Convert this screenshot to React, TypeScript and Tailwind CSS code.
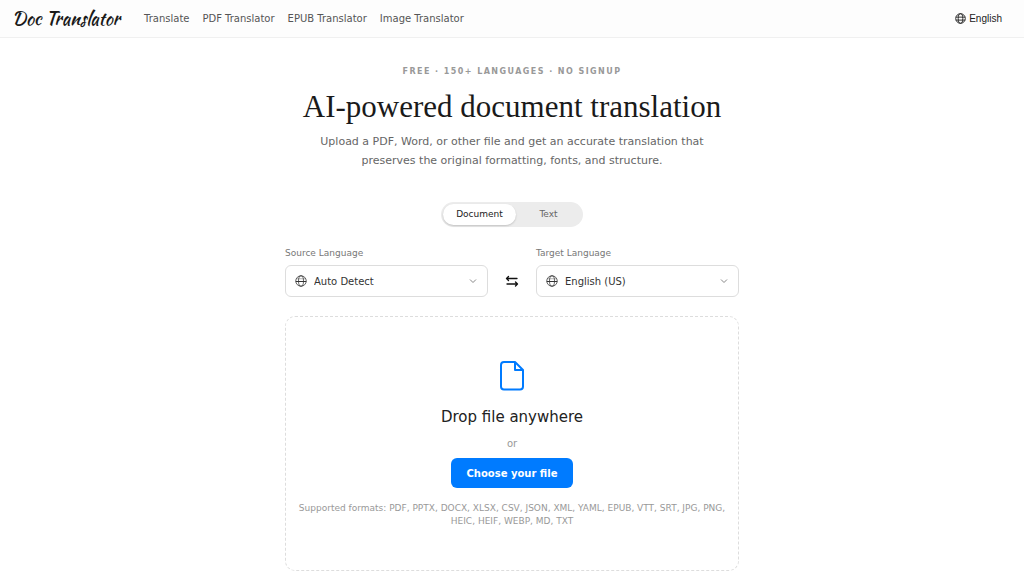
import { useState } from "react";

const navLinks = ["Translate", "PDF Translator", "EPUB Translator", "Image Translator"];

const modes = ["Document", "Text"];

const GlobeIcon = ({ className }: { className?: string }) => (
  <svg viewBox="0 0 24 24" fill="none" stroke="currentColor" strokeWidth="2" className={className} aria-hidden="true">
    <circle cx="12" cy="12" r="10.5" />
    <ellipse cx="12" cy="12" rx="5" ry="10.5" />
    <path d="M2 9h20M2 15.500h20" />
  </svg>
);

const ThinGlobeIcon = ({ className }: { className?: string }) => (
  <svg viewBox="0 0 24 24" fill="none" stroke="currentColor" strokeWidth="1.5" className={className} aria-hidden="true">
    <circle cx="12" cy="12" r="10.5" />
    <ellipse cx="12" cy="12" rx="5" ry="10.5" />
    <path d="M1.500 13h21" strokeWidth="2" />
    <path d="M3 7.500h18" strokeWidth="0.8" />
  </svg>
);

const ChevronIcon = () => (
  <svg
    viewBox="0 0 12 12"
    fill="none"
    stroke="currentColor"
    strokeWidth="1"
    className="pointer-events-none absolute right-[9px] top-1/2 size-3 -translate-y-1/2 text-[#888888]"
    aria-hidden="true"
  >
    <path d="M3 4.500l3 3l3-3" />
  </svg>
);

const SwapIcon = () => (
  <svg
    viewBox="0 0 14 14"
    fill="none"
    stroke="currentColor"
    strokeWidth="1.3"
    strokeLinecap="round"
    strokeLinejoin="round"
    className="size-3.5"
    aria-hidden="true"
  >
    <path d="M12 4.500H1.500M3.500 2.500L1.500 4.500l2 2M2 10h10.500M10.500 8l2 2l-2 2" />
  </svg>
);

const FileIcon = () => (
  <svg
    viewBox="0 0 24 30"
    fill="none"
    stroke="currentColor"
    strokeWidth="2"
    strokeLinejoin="round"
    className="h-[30px] w-6 text-[#007bff]"
    aria-hidden="true"
  >
    <path d="M4 1h11l8 8v16.500a3 3 0 0 1-3 3H4a3 3 0 0 1-3-3V4a3 3 0 0 1 3-3z" />
    <path d="M15 1v8h8" />
  </svg>
);

type LanguageSelectProps = {
  id: string;
  label: string;
  options: string[];
};

const LanguageSelect = ({ id, label, options }: LanguageSelectProps) => (
  <div className="min-w-0 flex-1">
    <label htmlFor={id} className="block text-[9px] leading-4 text-[#777777]">
      {label}
    </label>
    <div className="relative mt-1 text-[#333333]">
      <ThinGlobeIcon className="pointer-events-none absolute left-2.5 top-1/2 size-3 -translate-y-1/2" />
      <select
        id={id}
        className="h-8 w-full appearance-none rounded-md border border-[#dddddd] bg-white pl-7 pr-6 text-[10px]"
      >
        {options.map((option) => (
          <option key={option}>{option}</option>
        ))}
      </select>
      <ChevronIcon />
    </div>
  </div>
);

const Header = () => (
  <header className="flex h-[38px] items-center border-b border-[#f0f0f0] bg-[#fdfdfd] pl-3 pr-3.5">
    <a href="#" className="whitespace-nowrap font-['Kaushan_Script',cursive] text-[18px] leading-6 text-[#1a1a1a]">
      Doc Translator
    </a>
    <nav className="ml-6 flex gap-[13px]">
      {navLinks.map((link) => (
        <a key={link} href="#" className="whitespace-nowrap text-[10px] leading-4 text-[#555555]">
          {link}
        </a>
      ))}
    </nav>
    <button
      type="button"
      className="ml-auto flex h-6 items-center gap-[3px] rounded-md px-2 font-['Liberation_Sans',Arial,sans-serif] text-[10px] text-[#222222]"
    >
      <GlobeIcon className="size-[11px]" />
      English
    </button>
  </header>
);

const DropZone = () => (
  <section className="mt-[19px] flex flex-col items-center rounded-[10px] border border-dashed border-[#dddddd] px-2 pb-[42px] pt-11 text-center">
    <FileIcon />
    <h2 className="mt-3.5 text-[15px] leading-6 text-[#222222]">Drop file anywhere</h2>
    <p className="mt-[7px] text-[10px] leading-4 text-[#999999]">or</p>
    <button
      type="button"
      className="mt-1.5 h-[30px] rounded-md bg-[#007bff] px-4 text-[10px] font-bold text-white"
    >
      Choose your file
    </button>
    <p className="mt-3.5 text-[9px] leading-[13px] text-[#999999]">
      Supported formats: PDF, PPTX, DOCX, XLSX, CSV, JSON, XML, YAML, EPUB, VTT, SRT, JPG, PNG, HEIC, HEIF, WEBP, MD,
      TXT
    </p>
  </section>
);

const App = () => {
  const [mode, setMode] = useState("Document");

  return (
    <div className="min-h-screen bg-white font-['DejaVu_Sans',sans-serif]">
      <Header />
      <main className="mx-auto max-w-[454px] pb-1 pt-[26px]">
        <div className="text-center">
          <p className="text-[8px] font-bold uppercase leading-4 tracking-[0.18em] text-[#999999]">
            Free · 150+ languages · No signup
          </p>
          <h1 className="mt-[7px] whitespace-nowrap font-['Liberation_Serif',serif] text-[31px] leading-10 text-[#1a1a1a]">
            AI-powered document translation
          </h1>
          <p className="mx-auto mt-[5px] max-w-[410px] text-[11px] leading-[19px] text-[#666666]">
            Upload a PDF, Word, or other file and get an accurate translation that preserves the original formatting,
            fonts, and structure.
          </p>
        </div>
        <div className="mx-auto mt-8 flex w-[142px] rounded-full bg-[#ececec] p-0.5">
          {modes.map((item) => (
            <button
              key={item}
              type="button"
              aria-pressed={mode === item}
              onClick={() => setMode(item)}
              className={
                mode === item
                  ? "h-[21px] w-[73px] rounded-full bg-white text-[9px] text-[#222222] shadow-[0_1px_2px_rgba(0,0,0,0.18)]"
                  : "h-[21px] flex-1 rounded-full text-[9px] text-[#666666]"
              }
            >
              {item}
            </button>
          ))}
        </div>
        <div className="mt-[18px] flex items-end">
          <LanguageSelect id="source" label="Source Language" options={["Auto Detect", "English (US)"]} />
          <button
            type="button"
            aria-label="Swap languages"
            className="flex h-8 w-12 items-center justify-center text-[#111111]"
          >
            <SwapIcon />
          </button>
          <LanguageSelect id="target" label="Target Language" options={["English (US)", "Spanish"]} />
        </div>
        <DropZone />
      </main>
    </div>
  );
};

export default App;
